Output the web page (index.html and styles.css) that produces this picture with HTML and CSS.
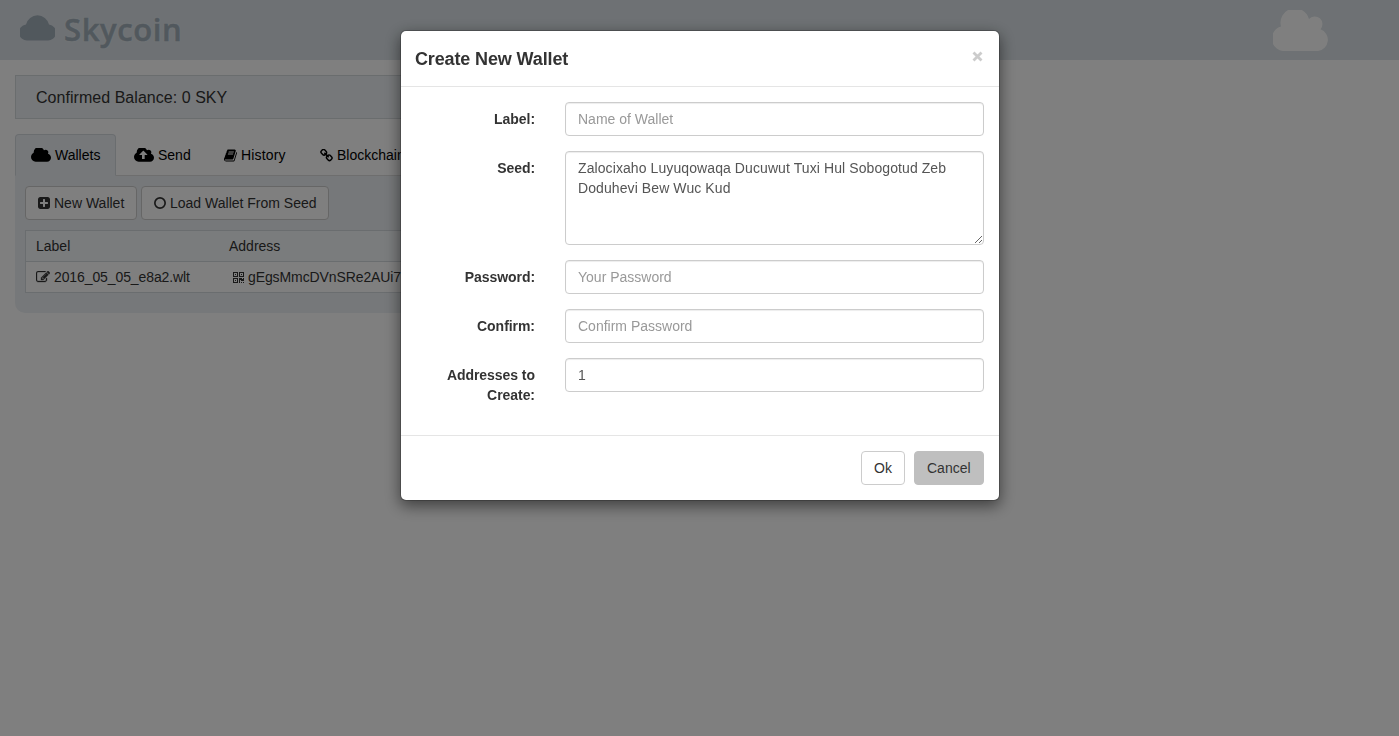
FILE: index.html
```html
<!DOCTYPE html>
<html lang="en">
<head>
<meta charset="utf-8">
<title>Skycoin</title>
<link rel="stylesheet" href="styles.css">
</head>
<body>
<header class="topbar">
  <div class="brand">
    <svg class="brand-cloud" viewBox="0 0 35 27"><path d="M8 26.500A8 8 0 0 1 6 10.500A11.800 11.800 0 0 1 29 10.500A8 8 0 0 1 27 26.500z"/></svg>
    <span class="brand-name">Skycoin</span>
  </div>
  <svg class="deco-cloud" viewBox="0 0 56 41"><path d="M12.500 41A12.500 12.500 0 0 1 8 16.500A14.200 14.200 0 0 1 36 9A7.200 7.200 0 0 1 47.500 19.200A11.300 11.300 0 0 1 45 41z"/><circle cx="22" cy="14" r="14"/></svg>
</header>

<main class="content">
  <div class="balance">Confirmed Balance: 0 SKY</div>
  <nav class="tabs">
    <a class="tab tab-wallets active"><svg class="icon cloud" viewBox="64 256 1920 1280"><path d="M1984 1152q0 159-112.500 271.500t-271.500 112.500h-1088q-185 0-316.500-131.500t-131.500-316.500q0-132 71-241.500t187-163.500q-2-28-2-43 0-212 150-362t362-150q158 0 286.500 88t187.500 230q70-62 166-62 106 0 181 75t75 181q0 75-41 138 129 30 213 134.500t84 239.500z"/></svg>Wallets</a>
    <a class="tab tab-send"><svg class="icon cloud" viewBox="64 256 1920 1280"><path fill-rule="evenodd" d="M1344 864q0-14-9-23l-352-352q-9-9-23-9t-23 9l-351 351q-10 12-10 24 0 14 9 23t23 9h224v352q0 13 9.500 22.500t22.500 9.500h192q13 0 22.500-9.500t9.500-22.500v-352h224q13 0 22.500-9.500t9.500-22.500zm640 288q0 159-112.500 271.500t-271.500 112.500h-1088q-185 0-316.500-131.500t-131.500-316.500q0-132 71-241.500t187-163.500q-2-28-2-43 0-212 150-362t362-150q158 0 286.500 88t187.500 230q70-62 166-62 106 0 181 75t75 181q0 75-41 138 129 30 213 134.500t84 239.500z"/></svg>Send</a>
    <a class="tab tab-history"><svg class="icon small" viewBox="64 64 1664 1664"><path d="M1703 478q40 57 18 129l-275 906q-19 64-76.500 107.500t-122.500 43.500h-923q-77 0-148.500-53.500t-99.500-131.500q-24-67-2-127 0-4 3-27t4-37q1-8-3-21.500t-3-19.500q2-11 8-21t16.500-23.500 16.500-23.500q23-38 45-91.500t30-91.500q3-10 .5-30t-.5-28q3-11 17-28t17-23q21-36 42-92t25-90q1-9-2.500-32t.5-28q4-13 22-30.500t22-22.500q19-26 42.500-84.500t27.500-96.500q1-8-3-25.500t-2-26.500q2-8 9-18t18-23 17-21q8-12 16.500-30.500t15-35 16-36 19.500-32 26.500-23.500 36-11.500 47.500 5.500l-1 3q38-9 51-9h761q74 0 114 56t18 130l-274 906q-36 119-71.500 153.500t-128.500 34.500h-869q-27 0-38 15-11 16-1 43 24 70 144 70h923q29 0 56-15.500t35-41.500l300-987q7-22 5-57 38 15 59 43zm-1064 2q-4 13 2 22.500t20 9.500h608q13 0 25.500-9.500t16.500-22.500l21-64q4-13-2-22.500t-20-9.500h-608q-13 0-25.500 9.500t-16.500 22.500zm-83 256q-4 13 2 22.500t20 9.500h608q13 0 25.500-9.500t16.500-22.500l21-64q4-13-2-22.500t-20-9.500h-608q-13 0-25.500 9.500t-16.500 22.500z"/></svg>History</a>
    <a class="tab tab-chain"><svg class="icon small" viewBox="64 64 1664 1664"><path d="M1520 1216q0-40-28-68l-208-208q-28-28-68-28-42 0-72 32 3 3 19 18.500t21.500 21.500 15 19 13 25.500 3.500 27.500q0 40-28 68t-68 28q-15 0-27.500-3.500t-25.500-13-19-15-21.500-21.500-18.500-19q-33 31-33 73 0 40 28 68l206 207q27 27 68 27 40 0 68-26l147-146q28-28 28-67zm-703-705q0-40-28-68l-206-207q-28-28-68-28-39 0-68 27l-147 146q-28 28-28 67 0 40 28 68l208 208q27 27 68 27 42 0 72-31-3-3-19-18.500t-21.500-21.500-15-19-13-25.500-3.500-27.500q0-40 28-68t68-28q15 0 27.500 3.500t25.500 13 19 15 21.500 21.500 18.500 19q33-31 33-73zm895 705q0 120-85 203l-147 146q-83 83-203 83-121 0-204-85l-206-207q-83-83-83-203 0-123 88-209l-88-88q-86 88-208 88-120 0-204-84l-208-208q-84-84-84-204t85-203l147-146q83-83 203-83 121 0 204 85l206 207q83 83 83 203 0 123-88 209l88 88q86-88 208-88 120 0 204 84l208 208q84 84 84 204z"/></svg>Blockchain</a>
  </nav>
  <section class="panel">
    <div class="actions">
      <button class="btn btn-new"><svg class="icon square" viewBox="128 128 1536 1536"><path d="M1408 960v-128q0-26-19-45t-45-19h-320v-320q0-26-19-45t-45-19h-128q-26 0-45 19t-19 45v320h-320q-26 0-45 19t-19 45v128q0 26 19 45t45 19h320v320q0 26 19 45t45 19h128q26 0 45-19t19-45v-320h320q26 0 45-19t19-45zm256-544v960q0 119-84.500 203.500t-203.500 84.500h-960q-119 0-203.500-84.500t-84.500-203.500v-960q0-119 84.500-203.500t203.500-84.500h960q119 0 203.500 84.500t84.500 203.500z"/></svg>New Wallet</button>
      <button class="btn btn-load"><svg class="icon square" viewBox="0 0 12 12"><circle class="ring" cx="6" cy="6" r="5.150"/></svg>Load Wallet From Seed</button>
    </div>
    <div class="table">
      <div class="row head"><span class="cell-label">Label</span><span class="cell-address">Address</span></div>
      <div class="row">
        <span class="cell-label wallet-label"><svg class="icon edit" viewBox="0 128 1792 1536"><path fill-rule="evenodd" d="M888 1184l116-116-152-152-116 116v56h96v96h56zm440-720q-16-16-33 1l-350 350q-17 17-1 33t33-1l350-350q17-17 1-33zm80 594v190q0 119-84.500 203.500t-203.500 84.500h-832q-119 0-203.500-84.500t-84.500-203.500v-832q0-119 84.500-203.500t203.500-84.500h832q63 0 117 25 15 7 18 23 3 17-9 29l-49 49q-14 14-32 8-23-6-45-6h-832q-66 0-113 47t-47 113v832q0 66 47 113t113 47h832q66 0 113-47t47-113v-126q0-13 9-22l64-64q15-15 35-7t20 29zm-96-738l288 288-672 672h-288v-288zm444 132l-92 92-288-288 92-92q28-28 68-28t68 28l152 152q28 28 28 68t-28 68z"/></svg>2016_05_05_e8a2.wlt</span>
        <span class="cell-address wallet-address"><svg class="icon qr" viewBox="0 0 11 11" shape-rendering="crispEdges"><path fill-rule="evenodd" d="M0 0h5v5H0zM1 1v3h3V1zM2 2h1v1H2zM6 0h5v5H6zM7 1v3h3V1zM8 2h1v1H8zM0 6h5v5H0zM1 7v3h3V7zM2 8h1v1H2zM6 6h3v1h1V6h1v3H8V8H7v3H6zM8 10h1v1H8zM10 10h1v1h-1z"/></svg>gEgsMmcDVnSRe2AUi7Rk</span>
      </div>
    </div>
  </section>
</main>

<div class="backdrop">
  <div class="modal" role="dialog">
    <div class="modal-header">
      <h4 class="modal-title">Create New Wallet</h4>
      <svg class="close" viewBox="0 0 11 11"><path d="M1.500 1.500l8 8M9.500 1.500l-8 8"/></svg>
    </div>
    <form class="modal-body">
      <div class="field"><label class="label">Label:</label><div class="control"><input class="input" placeholder="Name of Wallet"></div></div>
      <div class="field"><label class="label">Seed:</label><div class="control"><textarea class="input seed" spellcheck="false">Zalocixaho Luyuqowaqa Ducuwut Tuxi Hul Sobogotud Zeb Doduhevi Bew Wuc Kud</textarea></div></div>
      <div class="field"><label class="label">Password:</label><div class="control"><input class="input" placeholder="Your Password"></div></div>
      <div class="field"><label class="label">Confirm:</label><div class="control"><input class="input" placeholder="Confirm Password"></div></div>
      <div class="field"><label class="label">Addresses to Create:</label><div class="control"><input class="input" value="1"></div></div>
    </form>
    <div class="modal-footer">
      <button class="btn btn-ok">Ok</button>
      <button class="btn btn-cancel">Cancel</button>
    </div>
  </div>
</div>
</body>
</html>
```
FILE: styles.css
```css
* { box-sizing: border-box; }
html, body { height: 100%; }
body {
  margin: 0;
  overflow: hidden;
  background: #fff;
  color: #333;
  font: 14px/20px "Liberation Sans", Arial, sans-serif;
}
button, input, textarea { font: inherit; letter-spacing: inherit; }

.topbar {
  display: flex;
  justify-content: space-between;
  height: 60px;
  padding: 10px 70px 0 20px;
  background: #dce3e8;
}
.brand { display: flex; }
.brand-cloud { width: 35px; height: 27px; margin-top: 4px; fill: #a3b0bb; }
.brand-name {
  margin-left: 9px;
  font: 600 31px/38px "Open Sans", sans-serif;
  letter-spacing: .6px;
  color: #a3b0bb;
  -webkit-text-stroke: .5px #a3b0bb;
  text-shadow: 0 0 2px #f0f4f6;
}
.deco-cloud { width: 56px; height: 41px; fill: #fff; }

.content { width: 700px; padding: 15px; }
.balance {
  height: 44px;
  padding: 12px 20px 10px;
  border: 1px solid #d5dadd;
  background: #edf1f4;
  font-size: 16px;
  letter-spacing: .04px;
}
.tabs { display: flex; margin-top: 15px; border-bottom: 1px solid #ddd; }
.tab {
  display: flex;
  align-items: center;
  height: 42px;
  margin: 0 2px -1px 0;
  padding: 0 15px;
  border: 1px solid transparent;
  border-radius: 4px 4px 0 0;
  color: #000;
  white-space: nowrap;
}
.tab.active { border-color: #d5dadf; border-bottom-color: #edf1f4; background: #edf1f4; }
.tab-wallets { width: 101px; }
.tab-send { width: 88px; }
.tab-history { width: 94px; letter-spacing: .15px; }
.icon { flex: none; fill: currentColor; margin-right: 4px; }
.icon.cloud { width: 20px; height: 14px; }
.icon.small { width: 13px; height: 13px; }
.icon.square { width: 12px; height: 12px; }
.icon.edit { width: 14px; height: 12px; stroke: currentColor; stroke-width: 40px; }
.icon.qr { width: 11px; height: 11px; }
.ring { fill: none; stroke: currentColor; stroke-width: 1.7; }

.panel { height: 137px; padding: 10px; border-radius: 0 0 10px 10px; background: #edf1f4; }
.actions { display: flex; gap: 4px; }
.btn {
  display: flex;
  align-items: center;
  height: 34px;
  padding: 0 12px;
  border: 1px solid #ccc;
  border-radius: 4px;
  background: #fff;
  color: #333;
  white-space: nowrap;
}
.btn-new { width: 112px; }
.btn-load { width: 188px; }
.table { margin-top: 10px; border: 1px solid #d5dadf; background: #fff; }
.row { display: flex; height: 30px; padding: 0 10px; align-items: center; }
.row.head { height: 31px; border-bottom: 1px solid #d5dadf; background: #f5f8fa; }
.cell-label, .cell-address { display: flex; align-items: center; }
.cell-label { width: 193px; }
.wallet-label { letter-spacing: -.1px; }
.wallet-address { padding-left: 4px; letter-spacing: -.1px; }

.backdrop { position: fixed; inset: 0; background: rgba(0, 0, 0, .5); }
.modal {
  width: 600px;
  margin: 30px auto 0 400px;
  border: 1px solid rgba(0, 0, 0, .2);
  border-radius: 6px;
  background: #fff;
  background-clip: padding-box;
  box-shadow: 0 5px 15px rgba(0, 0, 0, .5);
}
.modal-header {
  display: flex;
  justify-content: space-between;
  height: 56px;
  padding: 15px 15px 15px 14px;
  border-bottom: 1px solid #e5e5e5;
}
.modal-title { margin: 0; font-size: 18px; line-height: 26px; font-weight: 700; letter-spacing: -.13px; }
.close { width: 11px; height: 11px; margin: 5px 1px 0 0; fill: none; stroke: #ccc; stroke-width: 2.8; }
.modal-body { padding: 15px; }
.field { display: flex; gap: 30px; margin-bottom: 15px; }
.label { width: 119px; padding-top: 7px; font-weight: 700; text-align: right; letter-spacing: -.05px; }
.control { width: 419px; }
.input {
  display: block;
  width: 100%;
  height: 34px;
  padding: 6px 12px;
  border: 1px solid #ccc;
  border-radius: 4px;
  background: #fff;
  color: #555;
  box-shadow: inset 0 1px 1px rgba(0, 0, 0, .075);
}
.input::placeholder { color: #999; opacity: 1; }
.seed { height: 94px; resize: vertical; overflow: hidden; letter-spacing: .09px; }
.modal-footer {
  display: flex;
  justify-content: flex-end;
  gap: 9px;
  padding: 15px;
  border-top: 1px solid #e5e5e5;
}
.btn-ok { width: 44px; }
.btn-cancel { width: 70px; border-color: #bfbfbf; background: #bfbfbf; }
```
